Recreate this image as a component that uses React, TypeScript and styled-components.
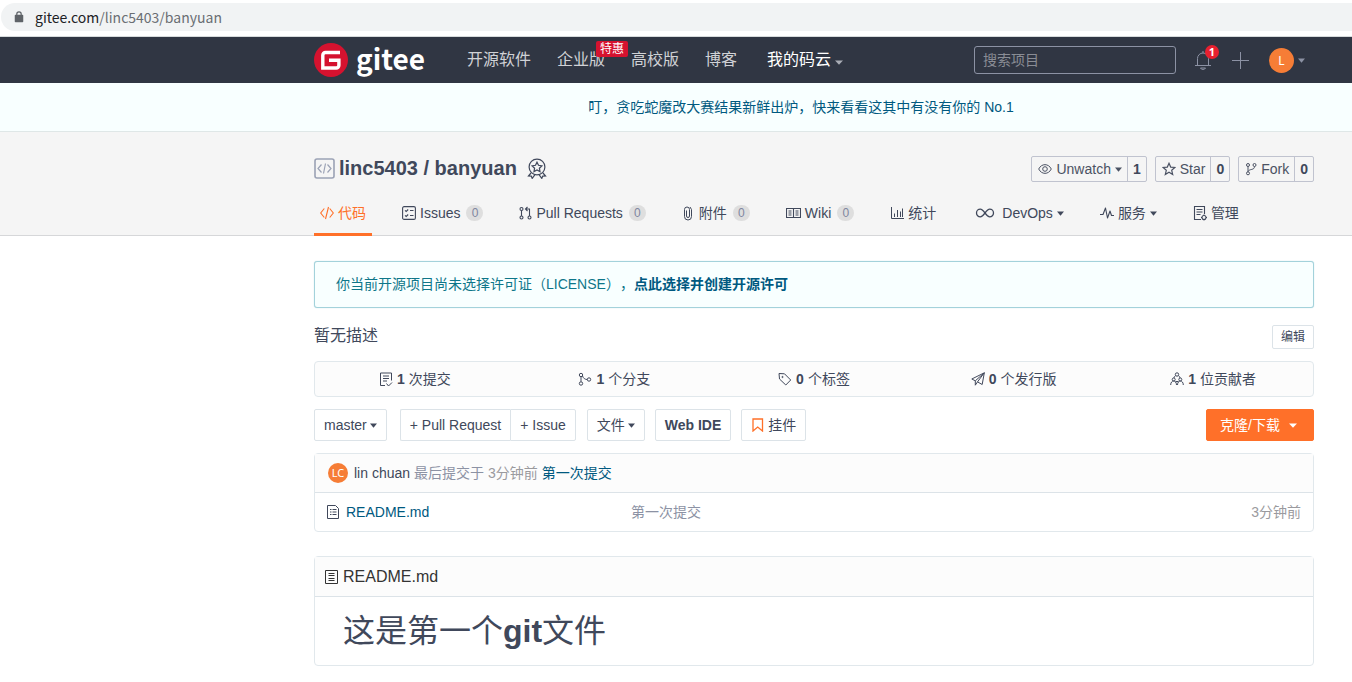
import React from 'react';
import styled, { createGlobalStyle } from 'styled-components';

const c = {
  text: '#40485b',
  muted: '#8c92a4',
  link: '#005980',
  orange: '#ff7029',
  avatar: '#f67d36',
  red: '#d5122f',
  dark: '#303643',
  line: '#dce3e8',
};

const Global = createGlobalStyle`
  * { box-sizing: border-box; }
  body {
    margin: 0;
    background: #fff;
    color: ${c.text};
    font: 14px/20px "Liberation Sans", "Noto Sans CJK SC", sans-serif;
    text-spacing-trim: space-all;
  }
  button, input { font: inherit; color: inherit; margin: 0; }
  button { cursor: pointer; }
  a { color: inherit; text-decoration: none; }
  svg { display: block; flex: none; }
`;

const UrlRow = styled.div`
  background: #fff;
  border-bottom: 1px solid #d7dbdc;
  padding: 3px 0 5px 1px;
`;
const UrlPill = styled.div`
  display: flex;
  align-items: center;
  gap: 10px;
  height: 28px;
  padding-left: 13px;
  border-radius: 14px 0 0 14px;
  background: #f1f3f4;
  color: #6a6e73;
  font-family: "Noto Sans CJK SC", sans-serif;
  b { font-weight: 400; color: #202124; }
`;

const Wrap = styled.div`
  padding: 0 38px 0 314px;
`;

const Header = styled.header`
  background: ${c.dark};
`;
const HeaderInner = styled(Wrap)`
  display: flex;
  align-items: center;
  height: 46px;
`;
const Logo = styled.a`
  display: flex;
  align-items: center;
  gap: 8px;
  width: 153px;
  color: #fff;
  font: 700 28px/34px "Noto Sans CJK SC", sans-serif;
  span { padding-bottom: 4px; }
`;
const MainNav = styled.nav`
  display: flex;
  gap: 26px;
  font-size: 16px;
  color: #d0d2d6;
`;
const NavItem = styled.a`
  position: relative;
`;
const NavMenu = styled.button`
  display: flex;
  align-items: center;
  gap: 4px;
  padding: 0 0 0 4px;
  border: 0;
  background: none;
  color: #fff;
  svg { margin-top: 5px; color: #a9adb6; }
`;
const Promo = styled.span`
  position: absolute;
  left: 39px;
  top: -9px;
  padding: 0 4px;
  border-radius: 2px;
  background: ${c.red};
  color: #fff;
  font-size: 12px;
  line-height: 16px;
  white-space: nowrap;
`;
const HeaderTools = styled.div`
  display: flex;
  align-items: center;
  margin-left: auto;
  padding-right: 9px;
  color: #8c92a4;
`;
const Search = styled.input`
  width: 202px;
  height: 28px;
  margin-right: 18px;
  padding: 0 8px;
  border: 1px solid #8c92a4;
  border-radius: 3px;
  background: transparent;
  color: #fff;
  &::placeholder { color: #8a8d95; opacity: 1; }
`;
const ToolButton = styled.button`
  position: relative;
  display: flex;
  align-items: center;
  gap: 4px;
  padding: 0;
  border: 0;
  background: none;
  margin-right: 20px;
  &:last-child { margin-right: 0; }
`;
const Bubble = styled.span`
  position: absolute;
  left: 11px;
  top: -4px;
  width: 14px;
  border-radius: 7px;
  background: #e8202f;
  color: #fff;
  font: 700 11px/14px "Noto Sans", sans-serif;
  text-align: center;
`;
const Avatar = styled.span<{ $size: number }>`
  flex: none;
  width: ${p => p.$size}px;
  border-radius: 50%;
  background: ${c.avatar};
  color: #fff;
  font-family: "Noto Sans", sans-serif;
  font-size: ${p => (p.$size > 22 ? 12 : 11)}px;
  line-height: ${p => p.$size}px;
  text-align: center;
`;

const Notice = styled.div`
  padding: 14px 0 14px 250px;
  border-bottom: 1px solid #dfe7e7;
  background: #f8ffff;
  color: ${c.link};
  text-align: center;
`;

const RepoHead = styled.section`
  background: #f5f5f5;
  border-bottom: 1px solid #d6d7d9;
`;
const TitleRow = styled.div`
  display: flex;
  align-items: center;
  justify-content: space-between;
  height: 58px;
  padding-top: 14px;
`;
const Title = styled.h1`
  display: flex;
  align-items: center;
  gap: 4px;
  margin: 0;
  font-size: 20px;
  line-height: 24px;
  span { margin-right: 6px; }
`;
const Actions = styled.div`
  display: flex;
  gap: 8px;
  padding-top: 2px;
`;
const ActionGroup = styled.div`
  display: flex;
  height: 26px;
  border: 1px solid #c0c3cf;
  border-radius: 2px;
`;
const ActionButton = styled.button`
  display: flex;
  align-items: center;
  gap: 4px;
  padding: 0 5px 0 6px;
  border: 0;
  background: none;
  color: #4b5263;
`;
const Count = styled.a`
  padding: 0 5px;
  border-left: 1px solid #c0c3cf;
  font-weight: 700;
  line-height: 24px;
`;
const Tabs = styled.nav`
  display: flex;
  gap: 24px;
  margin-bottom: -1px;
`;
const Tab = styled.a<{ $active?: boolean }>`
  display: flex;
  align-items: center;
  gap: 4px;
  height: 46px;
  padding: 0 6px;
  border: solid transparent;
  border-width: 3px 0;
  white-space: nowrap;
  ${p => p.$active && `color: ${c.orange}; border-bottom-color: ${c.orange};`}
`;
const Badge = styled.span`
  min-width: 17px;
  margin-left: 2px;
  border-radius: 8px;
  background: #dedede;
  color: #7f86a0;
  font-size: 12px;
  line-height: 16px;
  text-align: center;
`;

const Main = styled(Wrap)`
  padding-top: 25px;
  padding-bottom: 16px;
`;
const Alert = styled.div`
  padding: 12px 21px 13px;
  border: 1px solid #a3d2db;
  border-radius: 3px;
  box-shadow: 0 0 1px #a3d2db;
  background: #f8ffff;
  color: #0e7689;
  a { color: ${c.link}; font-weight: 700; }
`;
const Description = styled.div`
  display: flex;
  align-items: center;
  justify-content: space-between;
  height: 24px;
  margin: 17px 0 12px;
  font-size: 16px;
  p { margin: 0; padding-bottom: 2px; }
`;
const Button = styled.button<{ $small?: boolean; $primary?: boolean; $bold?: boolean; $menu?: boolean }>`
  display: flex;
  align-items: center;
  gap: ${p => (p.$menu ? 3 : 4)}px;
  height: ${p => (p.$small ? 24 : 32)}px;
  padding: 0 ${p => (p.$small ? 8 : 9)}px;
  border: 1px solid ${c.line};
  border-radius: 2px;
  background: #fff;
  font-size: ${p => (p.$small ? 12 : 14)}px;
  font-weight: ${p => (p.$bold ? 700 : 400)};
  white-space: nowrap;
  ${p => p.$primary && `
    gap: 9px;
    padding: 0 16px 0 13px;
    margin-left: auto;
    border-color: ${c.orange};
    background: ${c.orange};
    color: #fff;
  `}
`;
const Stats = styled.ul`
  display: grid;
  grid-template-columns: repeat(5, 1fr);
  margin: 0 0 12px;
  padding: 7px 0;
  border: 1px solid #e1e8ec;
  border-radius: 4px;
  background: #fcfcfc;
  list-style: none;
`;
const Stat = styled.li`
  a {
    display: flex;
    align-items: center;
    justify-content: center;
    gap: 4px;
  }
`;
const Toolbar = styled.div`
  display: flex;
  gap: 10px;
  margin-bottom: 12px;
`;
const ButtonPair = styled.div`
  display: flex;
  margin: 0 1px 0 3px;
  button:first-child { border-right: 0; border-radius: 2px 0 0 2px; }
  button:last-child { border-radius: 0 2px 2px 0; }
`;

const Panel = styled.section`
  border: 1px solid #e1e8ec;
  border-radius: 4px;
  margin-bottom: 24px;
`;
const CommitBar = styled.div`
  display: flex;
  align-items: center;
  gap: 4px;
  height: 39px;
  padding: 0 13px;
  border-bottom: 1px solid ${c.line};
  background: #fcfcfc;
  color: ${c.muted};
  time { color: #9a9a9e; }
`;
const Author = styled.a`
  display: flex;
  align-items: center;
  gap: 6px;
  color: ${c.text};
`;
const CommitLink = styled.a`
  color: ${c.link};
`;
const Files = styled.table`
  width: 100%;
  border-collapse: collapse;
  table-layout: fixed;
  td { height: 38px; padding: 0 12px; color: ${c.muted}; }
  td:first-child { width: 304px; }
  td:last-child { width: 120px; text-align: right; color: #9a9a9e; }
`;
const FileLink = styled.a`
  display: flex;
  align-items: center;
  gap: 7px;
  color: ${c.link};
  svg { color: ${c.text}; }
`;
const ReadmeHead = styled.div`
  display: flex;
  align-items: center;
  gap: 5px;
  height: 40px;
  padding: 1px 10px 0;
  border-bottom: 1px solid ${c.line};
  background: #fcfcfc;
  color: #333;
  font-size: 16px;
`;
const ReadmeBody = styled.article`
  padding: 10px 28px;
  h1 {
    margin: 0;
    font-size: 32px;
    font-weight: 400;
    line-height: 48px;
  }
`;

type IconProps = { w?: number; h?: number; color?: string; sw?: number; children: React.ReactNode };
const Icon = ({ w = 14, h = 14, color = 'currentColor', sw = 1, children }: IconProps) => (
  <svg width={w} height={h} viewBox={`0 0 ${w} ${h}`} fill="none" stroke={color} strokeWidth={sw} aria-hidden="true">
    {children}
  </svg>
);
const Caret = ({ w = 7 }: { w?: number }) => (
  <svg width={w} height="5" viewBox="0 0 8 5" preserveAspectRatio="none" fill="currentColor" aria-hidden="true">
    <path d="M0 .5h8L4 4.7z" />
  </svg>
);

const LockIcon = () => (
  <Icon w={11} h={12} color="#5f6368">
    <path d="M1.5 4.5h7v6h-7z" fill="#5f6368" strokeWidth="1.5" strokeLinejoin="round" />
    <path d="M2.8 4.5V3a2.2 2.2 0 0 1 4.4 0v1.5" strokeWidth="1.2" />
  </Icon>
);
const GiteeMark = () => (
  <svg width="34" height="34" viewBox="0 0 34 34" aria-hidden="true">
    <circle cx="17" cy="17" r="17" fill={c.red} />
    <path d="M26 9.500H11.500a2.700 2.700 0 0 0-2.700 2.700V25h13.400a2.700 2.700 0 0 0 2.700-2.700v-5H15" fill="none" stroke="#fff" strokeWidth="3.400" />
  </svg>
);
const BellIcon = () => (
  <Icon w={18} h={22}>
    <path d="M3.500 16.500V9.500a5.500 5.500 0 0 1 11 0v7M1 16.500h16M9 2v2M6.500 19a2.600 2 0 0 0 5 0z" />
  </Icon>
);
const PlusIcon = () => <Icon w={17} h={17}><path d="M8.500 0v17M0 8.500h17" /></Icon>;
const RepoIcon = () => (
  <Icon w={21} h={21} color="#9ba2b5">
    <rect x="1" y="1" width="19" height="19" rx="2" strokeWidth="1.600" />
    <path d="M7.500 6.500L4 10.500l3.500 4M13.500 6.500l3.500 4-3.500 4M11.500 5.500l-2 10" strokeWidth="1.200" />
  </Icon>
);
const MedalIcon = () => (
  <Icon w={20} h={21} sw={1.2}>
    <circle cx="10" cy="9" r="7.900" />
    <path d="M10 4.200l1.500 3.100 3.400.5-2.500 2.400.6 3.400-3-1.600-3 1.600.6-3.400-2.500-2.400 3.400-.5z" />
    <path d="M4 15l-2.500 3 2.800.1.900 2.300L8 16.700M16 15l2.500 3-2.800.1-.9 2.300L12 16.700" />
  </Icon>
);
const EyeIcon = () => (
  <Icon w={14} h={12}>
    <path d="M.7 6C3.500.2 10.500.2 13.300 6 10.500 11.800 3.500 11.800.7 6z" />
    <circle cx="7" cy="6" r="2.300" />
  </Icon>
);
const StarIcon = () => (
  <Icon sw={1.2}>
    <path d="M7 1.300l1.700 3.800 4.200.4-3.200 2.800 1 4.200L7 10.300l-3.700 2.200 1-4.200L1.100 5.500l4.200-.4z" />
  </Icon>
);
const ForkIcon = () => (
  <Icon w={12} h={14}>
    <circle cx="3" cy="3" r="1.500" /><circle cx="3" cy="11.300" r="1.500" /><circle cx="9.500" cy="3" r="1.500" />
    <path d="M3 4.500v5.300M9.500 4.500c0 4-5 2-6.500 5" />
  </Icon>
);
const CodeIcon = () => <Icon sw={1.1}><path d="M4.300 2.500L.7 7l3.600 4.500M9.700 2.500L13.300 7l-3.600 4.500M8.500 1l-3 12" /></Icon>;
const IssueIcon = () => (
  <Icon sw={1.1}>
    <rect x=".6" y=".6" width="12.800" height="12.800" rx="1.500" />
    <path d="M3 4.300l1.200 1.200 2-2M3 9.300l1.200 1.200 2-2M8 4.500h3.500M8 9.500h3.500" />
  </Icon>
);
const PullIcon = () => (
  <Icon w={13} sw={1.1}>
    <circle cx="2.500" cy="3" r="1.500" /><circle cx="2.500" cy="11.500" r="1.500" /><circle cx="10.500" cy="11.500" r="1.500" />
    <path d="M2.500 4.500V10M10.500 10V3H6.500M8.500 1l-2 2 2 2" />
  </Icon>
);
const ClipIcon = () => (
  <Icon w={13} h={15}>
    <path d="M4.500 4.500v5.500a1.500 1.500 0 0 0 3 0V3.500a2.500 2.500 0 0 0-5 0V10.500a3.500 3.500 0 0 0 7 0V3.500L8 1" />
  </Icon>
);
const WikiIcon = () => (
  <Icon w={15} h={12} sw={1.1}>
    <path d="M.5 1.500h14v9H.5zM7.500 1.500v9M2.500 4h3M2.500 6h3M2.500 8h3M9.500 4h3M9.500 6h3M9.500 8h3" />
  </Icon>
);
const ChartIcon = () => <Icon><path d="M1.500 1v11.500H14M4.500 11V7.500M7.500 11V4M10.500 11V5.500M12.500 11V2.500" /></Icon>;
const InfinityIcon = () => (
  <Icon w={26} h={10} sw={1.3}>
    <path d="M13 5C11 2.300 10 1.200 8.300 1.200a3.600 3.600 0 0 0 0 7.600C10 8.800 11 7.700 13 5s3-3.800 4.700-3.800a3.600 3.600 0 0 1 0 7.600C16 8.800 15 7.700 13 5z" />
  </Icon>
);
const PulseIcon = () => <Icon sw={1.1}><path d="M0 8.500h3L5.500 2l2 10 2.500-7 1.500 4.500H14" strokeLinejoin="round" /></Icon>;
const ManageIcon = () => (
  <Icon h={15} sw={1.1}>
    <path d="M11.500 8V.5h-10v13H8M3.500 3.500h6M3.500 6h6M3.500 8.500h4" />
    <circle cx="11" cy="11.500" r="2" />
    <path d="M11 8.500v1M11 13.500v1M8 11.500h1M13 11.500h1" />
  </Icon>
);
const CommitIcon = () => (
  <Icon h={15}>
    <path d="M12.500 8.500V1H1.500v12.500H6M4 4h6M4 6.500h6M4 9h4M7.500 11.500l2 2.500L13 10.500" />
  </Icon>
);
const BranchIcon = () => (
  <Icon>
    <circle cx="3" cy="3" r="1.700" /><circle cx="3" cy="11.500" r="1.700" /><circle cx="11" cy="7.500" r="1.700" />
    <path d="M3 4.700v5M4.500 4c1 2.500 2.500 3.500 4.800 3.500" />
  </Icon>
);
const TagIcon = () => (
  <Icon>
    <path d="M1 1.500l5.500.3 6.200 6.200-4.900 5L1.500 7z" /><circle cx="4.500" cy="5" r=".6" />
  </Icon>
);
const PlaneIcon = () => <Icon><path d="M13.300.8L.8 7l3.500 1.800L13.300.8l-2.100 11.700-4.700-2.600M4.300 8.800v4.400l2.200-3.300 6.800-9.100" strokeLinejoin="round" /></Icon>;
const PeopleIcon = () => (
  <Icon>
    <circle cx="7" cy="2.500" r="1.700" /><circle cx="3.700" cy="7.500" r="1.500" /><circle cx="10.300" cy="7.500" r="1.500" />
    <path d="M.7 13c0-5.300 5.800-5.300 5.800 0M7.500 13c0-5.300 5.800-5.300 5.800 0M5.500 3.800C4.500 4.300 4 5 3.900 6M8.500 3.800c1 .5 1.500 1.200 1.600 2.200M5.500 9.500h3" />
  </Icon>
);
const BookmarkIcon = () => <Icon w={13} color={c.orange} sw={1.3}><path d="M2 1h9.500v12L6.700 9 2 13z" /></Icon>;
const FileIcon = () => (
  <Icon w={12}>
    <path d="M.5.5h8l3 3v10H.5zM3 4.500h1.500M5.500 4.500h4M3 7h1.500M5.500 7h4M3 9.500h1.500M5.500 9.500h4" />
  </Icon>
);
const BookIcon = () => <Icon w={13}><path d="M.5.500h12v13H.5zM3.500 3.500h6M3.500 5.500h6M3.500 8.500h6M3.500 10.500h6" /></Icon>;

const tabs: { label: string; icon: React.ReactNode; count?: number; menu?: boolean; active?: boolean }[] = [
  { label: '代码', icon: <CodeIcon />, active: true },
  { label: 'Issues', icon: <IssueIcon />, count: 0 },
  { label: 'Pull Requests', icon: <PullIcon />, count: 0 },
  { label: '附件', icon: <ClipIcon />, count: 0 },
  { label: 'Wiki', icon: <WikiIcon />, count: 0 },
  { label: '统计', icon: <ChartIcon /> },
  { label: 'DevOps', icon: <InfinityIcon />, menu: true },
  { label: '服务', icon: <PulseIcon />, menu: true },
  { label: '管理', icon: <ManageIcon /> },
];

const stats = [
  { n: 1, label: '次提交', icon: <CommitIcon /> },
  { n: 1, label: '个分支', icon: <BranchIcon /> },
  { n: 0, label: '个标签', icon: <TagIcon /> },
  { n: 0, label: '个发行版', icon: <PlaneIcon /> },
  { n: 1, label: '位贡献者', icon: <PeopleIcon /> },
];

const actions = [
  { label: 'Unwatch', n: 1, icon: <EyeIcon />, menu: true },
  { label: 'Star', n: 0, icon: <StarIcon /> },
  { label: 'Fork', n: 0, icon: <ForkIcon /> },
];

export default function App() {
  return (
    <>
      <Global />
      <UrlRow>
        <UrlPill>
          <LockIcon />
          <span><b>gitee.com</b>/linc5403/banyuan</span>
        </UrlPill>
      </UrlRow>
      <Header>
        <HeaderInner>
          <Logo href="#"><GiteeMark /><span>gitee</span></Logo>
          <MainNav>
            <NavItem href="#">开源软件</NavItem>
            <NavItem href="#">企业版<Promo>特惠</Promo></NavItem>
            <NavItem href="#">高校版</NavItem>
            <NavItem href="#">博客</NavItem>
            <NavMenu>我的码云<Caret w={8} /></NavMenu>
          </MainNav>
          <HeaderTools>
            <Search type="search" placeholder="搜索项目" aria-label="搜索项目" />
            <ToolButton aria-label="通知"><BellIcon /><Bubble>1</Bubble></ToolButton>
            <ToolButton aria-label="新建"><PlusIcon /></ToolButton>
            <ToolButton><Avatar $size={25}>L</Avatar><Caret /></ToolButton>
          </HeaderTools>
        </HeaderInner>
      </Header>
      <Notice><a href="#">叮，贪吃蛇魔改大赛结果新鲜出炉，快来看看这其中有没有你的 No.1</a></Notice>
      <RepoHead>
        <Wrap>
          <TitleRow>
            <Title><RepoIcon /><span>linc5403 / banyuan</span><MedalIcon /></Title>
            <Actions>
              {actions.map(a => (
                <ActionGroup key={a.label}>
                  <ActionButton>{a.icon}{a.label}{a.menu && <Caret />}</ActionButton>
                  <Count href="#">{a.n}</Count>
                </ActionGroup>
              ))}
            </Actions>
          </TitleRow>
          <Tabs>
            {tabs.map(t => (
              <Tab key={t.label} href="#" $active={t.active}>
                {t.icon}{t.label}
                {t.count !== undefined && <Badge>{t.count}</Badge>}
                {t.menu && <Caret />}
              </Tab>
            ))}
          </Tabs>
        </Wrap>
      </RepoHead>
      <Main as="main">
        <Alert>你当前开源项目尚未选择许可证（LICENSE），<a href="#">点此选择并创建开源许可</a></Alert>
        <Description><p>暂无描述</p><Button $small>编辑</Button></Description>
        <Stats>
          {stats.map(s => (
            <Stat key={s.label}><a href="#">{s.icon}<b>{s.n}</b>{s.label}</a></Stat>
          ))}
        </Stats>
        <Toolbar>
          <Button $menu>master<Caret /></Button>
          <ButtonPair>
            <Button>+ Pull Request</Button>
            <Button>+ Issue</Button>
          </ButtonPair>
          <Button $menu>文件<Caret /></Button>
          <Button $bold>Web IDE</Button>
          <Button><BookmarkIcon />挂件</Button>
          <Button $primary>克隆/下载<Caret w={8} /></Button>
        </Toolbar>
        <Panel>
          <CommitBar>
            <Author href="#"><Avatar $size={20}>LC</Avatar>lin chuan</Author>
            <span>最后提交于</span>
            <time>3分钟前</time>
            <CommitLink href="#">第一次提交</CommitLink>
          </CommitBar>
          <Files>
            <tbody>
              <tr>
                <td><FileLink href="#"><FileIcon />README.md</FileLink></td>
                <td>第一次提交</td>
                <td>3分钟前</td>
              </tr>
            </tbody>
          </Files>
        </Panel>
        <Panel>
          <ReadmeHead><BookIcon />README.md</ReadmeHead>
          <ReadmeBody><h1>这是第一个<b>git</b>文件</h1></ReadmeBody>
        </Panel>
      </Main>
    </>
  );
}
